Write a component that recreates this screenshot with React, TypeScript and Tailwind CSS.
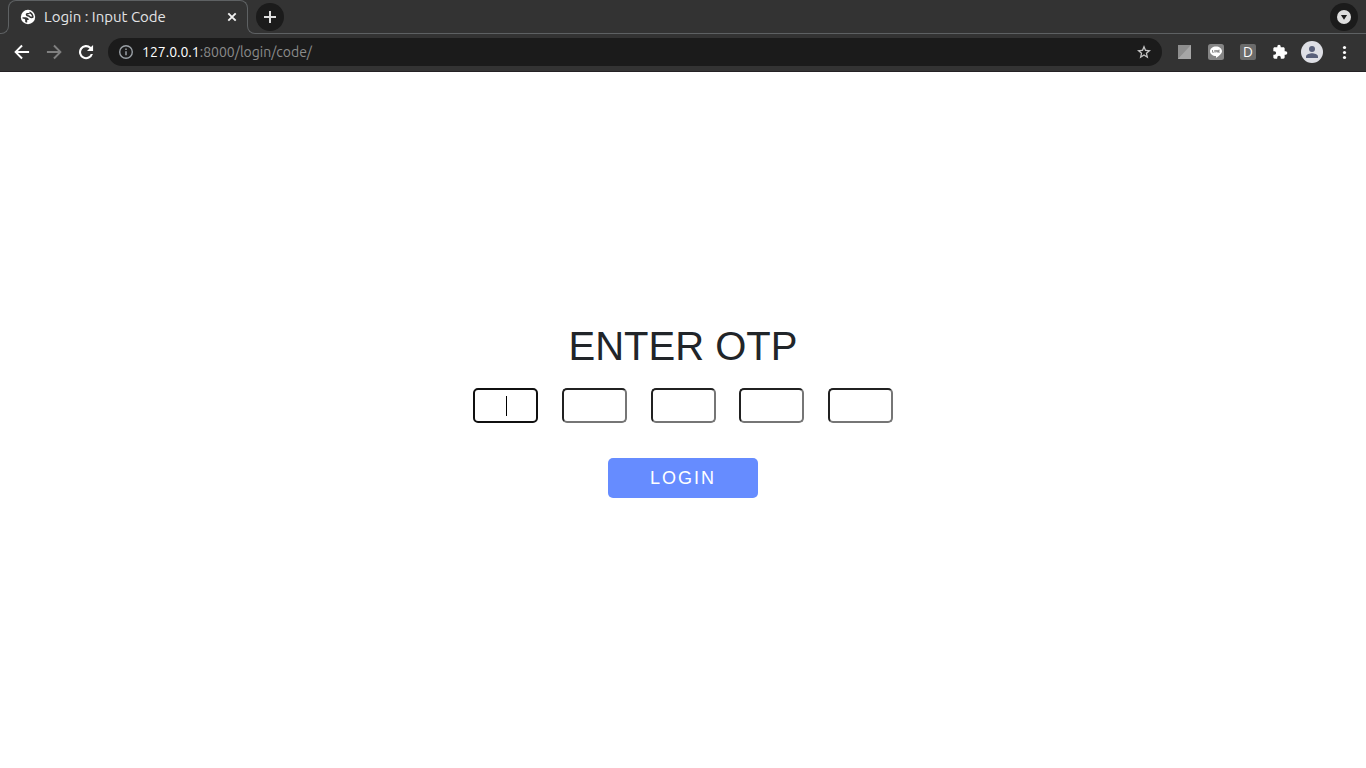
import { useState } from "react";

const DIGITS = [1, 2, 3, 4, 5];

function TabStrip() {
  return (
    <div className="flex h-[34px] items-end">
      <div className="-mr-px h-2 w-[9px] rounded-br-lg border-r border-b border-[#5e6163]" />
      <div className="h-[26px] w-60 self-start rounded-t-lg border border-b-0 border-[#5e6163]">
        <div className="flex h-8 items-center pr-[7px] pl-[11px]">
          <svg className="size-4 shrink-0" viewBox="0 0 16 16" aria-hidden="true">
            <circle cx="8" cy="8" r="7.200" fill="#fff" />
            <path
              fill="#333"
              d="M2.400 8.200H5.400C7.300 8.200 8.800 9.200 8.800 11H7.200V13.600C6.500 13.500 5.800 13.200 5.200 12.900V11.200C5.200 10 4.300 9.700 2.700 9.700zM9.500 2.600C11.600 3.200 13.200 5 13.600 7.600V8.500C12.700 9.400 10.200 9.400 9.200 8.200 8.700 7.500 7 7.700 6.200 6.800 5.300 5.600 5.800 4 7.400 4H9.500zM8.700 5.200H7.800C7.300 5.200 7.300 6 8 6.100 9.200 6.300 10 6.900 10.600 7.500H12.200C11.800 6.200 10.800 5.200 9.900 4.600z"
            />
          </svg>
          <span className="ml-2 flex-1 text-[15px] leading-5 text-[#e3e4e6]">Login : Input Code</span>
          <button type="button" aria-label="Close tab" className="flex size-4 items-center justify-center">
            <svg className="size-4" viewBox="0 0 16 16" aria-hidden="true">
              <path d="M4.300 4.300l7.400 7.400M11.700 4.300l-7.400 7.400" stroke="#f1f1f1" strokeWidth="1.900" />
            </svg>
          </button>
        </div>
      </div>
      <div className="-ml-px h-2 w-[9px] rounded-bl-lg border-b border-l border-[#5e6163]" />
      <div className="flex h-[34px] flex-1 items-center justify-between border-b border-[#5e6163] pr-2">
        <button
          type="button"
          aria-label="New tab"
          className="flex size-7 items-center justify-center rounded-full bg-[#1b1b1b]"
        >
          <svg className="size-4" viewBox="0 0 16 16" aria-hidden="true">
            <path d="M8 2v12M2 8h12" stroke="#dedede" strokeWidth="2" />
          </svg>
        </button>
        <button
          type="button"
          aria-label="Search tabs"
          className="flex size-7 items-center justify-center rounded-full bg-[#1b1b1b]"
        >
          <svg className="size-4" viewBox="0 0 16 16" aria-hidden="true">
            <circle cx="8" cy="8" r="7" fill="#dedede" />
            <path d="M4.900 6h6.200L8 10.800z" fill="#1b1b1b" />
          </svg>
        </button>
      </div>
    </div>
  );
}

const toolButton = "flex size-8 items-center justify-center";

function Toolbar() {
  return (
    <div className="flex h-[38px] items-center border-b border-[#242124] px-[6px] pb-px">
      <button type="button" aria-label="Back" className={toolButton}>
        <svg className="size-5" viewBox="0 0 24 24" fill="#fff" aria-hidden="true">
          <path d="M20.500 10.800H7.100l5.800-5.800L11.200 3.400 2.700 12l8.500 8.600 1.700-1.700-5.800-5.700h13.400z" />
        </svg>
      </button>
      <button type="button" aria-label="Forward" className={toolButton}>
        <svg className="size-5" viewBox="0 0 24 24" fill="#808080" aria-hidden="true">
          <path d="M3.500 10.800h13.400L11.100 5l1.700-1.600 8.500 8.600-8.500 8.600-1.700-1.700 5.800-5.700H3.500z" />
        </svg>
      </button>
      <button type="button" aria-label="Reload" className={toolButton}>
        <svg className="size-5" viewBox="0 0 24 24" fill="#fff" aria-hidden="true">
          <path d="M18 6A8.500 8.500 0 1 0 20.300 14.300h-2.600A6 6 0 1 1 16.200 7.800L13.200 10.900h7.300V3.500z" />
        </svg>
      </button>
      <div className="mx-[6px] flex h-7 flex-1 items-center rounded-full bg-[#1b1b1b] px-[10px]">
        <svg className="size-4 shrink-0" viewBox="0 0 16 16" fill="none" aria-hidden="true">
          <circle cx="8" cy="8" r="6.300" stroke="#9aa0a6" strokeWidth="1.400" />
          <path d="M8 7.300v4M8 4.500V6" stroke="#9aa0a6" strokeWidth="1.500" />
        </svg>
        <div className="ml-2 flex-1 text-sm text-[#8b8c8c]">
          <span className="text-white">127.0.0.1</span>:8000/login/code/
        </div>
        <button type="button" aria-label="Bookmark this page">
          <svg className="size-4" viewBox="0 0 24 24" fill="#c4c4c4" aria-hidden="true">
            <path d="M22.500 9.200l-7.600-.6L12 1.600 9.100 8.600l-7.600.6 5.800 5-1.800 7.400L12 17.700l6.500 3.900-1.800-7.400zM12 15.400l-3.500 2.100.9-4-3.100-2.700 4.100-.4L12 6.600l1.600 3.800 4.100.4-3.100 2.700.9 4z" />
          </svg>
        </button>
      </div>
      <button type="button" aria-label="Screen extension" className={toolButton}>
        <svg className="size-4" viewBox="0 0 16 16" aria-hidden="true">
          <path d="M2 1h13v14H2z" fill="#989898" />
          <path d="M2 1h13L2 15z" fill="#8e8e8e" />
          <path d="M15 1v14H2z" fill="#a6a6a6" />
        </svg>
      </button>
      <button type="button" aria-label="Chat extension" className={toolButton}>
        <svg className="size-4" viewBox="0 0 16 16" aria-hidden="true">
          <rect width="16" height="16" rx="2.500" fill="#858585" />
          <path d="M8 2.400c3.300 0 6 2.100 6 4.800 0 2.400-3.300 4.800-6 6.800v-2C4.700 11.900 2 9.900 2 7.200 2 4.500 4.700 2.400 8 2.400z" fill="#fff" />
          <path d="M4.500 6v2.300h1.300M6.800 6v2.500M7.900 8.500V6l1.500 2.300V6M11.700 6.200h-1.200v2.100h1.200M10.500 7.200h1" fill="none" stroke="#777" strokeWidth=".8" />
        </svg>
      </button>
      <button type="button" aria-label="Dictionary extension" className={toolButton}>
        <span className="flex size-4 items-center justify-center rounded-xs bg-[#6b6b6b] text-sm leading-4 text-white">
          D
        </span>
      </button>
      <button type="button" aria-label="Extensions" className={toolButton}>
        <svg className="size-4" viewBox="0 0 24 24" fill="#fff" aria-hidden="true">
          <path d="M20.500 11H19V7c0-1.100-.9-2-2-2h-4V3.500a2.500 2.500 0 0 0-5 0V5H4c-1.100 0-2 .9-2 2v3.800h1.500a2.700 2.700 0 0 1 0 5.400H2V20c0 1.100.9 2 2 2h3.800v-1.500a2.700 2.700 0 0 1 5.400 0V22H17c1.100 0 2-.9 2-2v-4h1.500a2.500 2.500 0 0 0 0-5z" />
        </svg>
      </button>
      <button type="button" aria-label="Profile" className={toolButton}>
        <svg className="size-[22px]" viewBox="0 0 22 22" aria-hidden="true">
          <circle cx="11" cy="11" r="11" fill="#dedfe5" />
          <circle cx="11" cy="8" r="3" fill="#59607a" />
          <path d="M5 17v-1.500c0-2 4-3.200 6-3.200s6 1.200 6 3.200V17z" fill="#59607a" />
        </svg>
      </button>
      <button type="button" aria-label="Menu" className={toolButton}>
        <svg className="size-4" viewBox="0 0 16 16" fill="#fff" aria-hidden="true">
          <circle cx="8.500" cy="3.500" r="1.600" />
          <circle cx="8.500" cy="8.500" r="1.600" />
          <circle cx="8.500" cy="13.500" r="1.600" />
        </svg>
      </button>
    </div>
  );
}

export default function App() {
  const [code, setCode] = useState<string[]>(DIGITS.map(() => ""));

  return (
    <div className="flex min-h-screen flex-col bg-white">
      <header className="bg-[#333333] font-['Ubuntu','Noto_Sans',sans-serif]">
        <TabStrip />
        <Toolbar />
      </header>
      <main className="flex flex-1 flex-col items-center justify-center px-4 pb-5 font-['Liberation_Sans',Arial,sans-serif]">
        <form className="flex w-full max-w-[420px] flex-col items-center" onSubmit={(e) => e.preventDefault()}>
          <h1 className="text-[40px] leading-12 text-[#212529]">ENTER OTP</h1>
          <div className="mt-[18px] flex w-full justify-between">
            {DIGITS.map((n, i) => (
              <div key={n} className="relative">
                <input
                  type="text"
                  inputMode="numeric"
                  maxLength={1}
                  aria-label={`Digit ${n}`}
                  value={code[i]}
                  onChange={(e) => setCode(code.map((c, j) => (j === i ? e.target.value : c)))}
                  className={
                    i === 0
                      ? "block h-[35px] w-[65px] rounded-[5px] border-2 border-[#101010] text-center outline-none"
                      : "block h-[35px] w-[65px] rounded-[5px] border-2 border-t-[#212121] border-r-[#767676] border-b-[#767676] border-l-[#212121] text-center outline-none"
                  }
                />
                {i === 0 && code[0] === "" && (
                  <span className="pointer-events-none absolute top-2 left-[33px] h-5 w-px bg-black" />
                )}
              </div>
            ))}
          </div>
          <button
            type="submit"
            className="mt-[35px] h-10 w-[150px] rounded-[5px] bg-[#668cff] text-lg tracking-[2px] text-white"
          >
            LOGIN
          </button>
        </form>
      </main>
    </div>
  );
}
